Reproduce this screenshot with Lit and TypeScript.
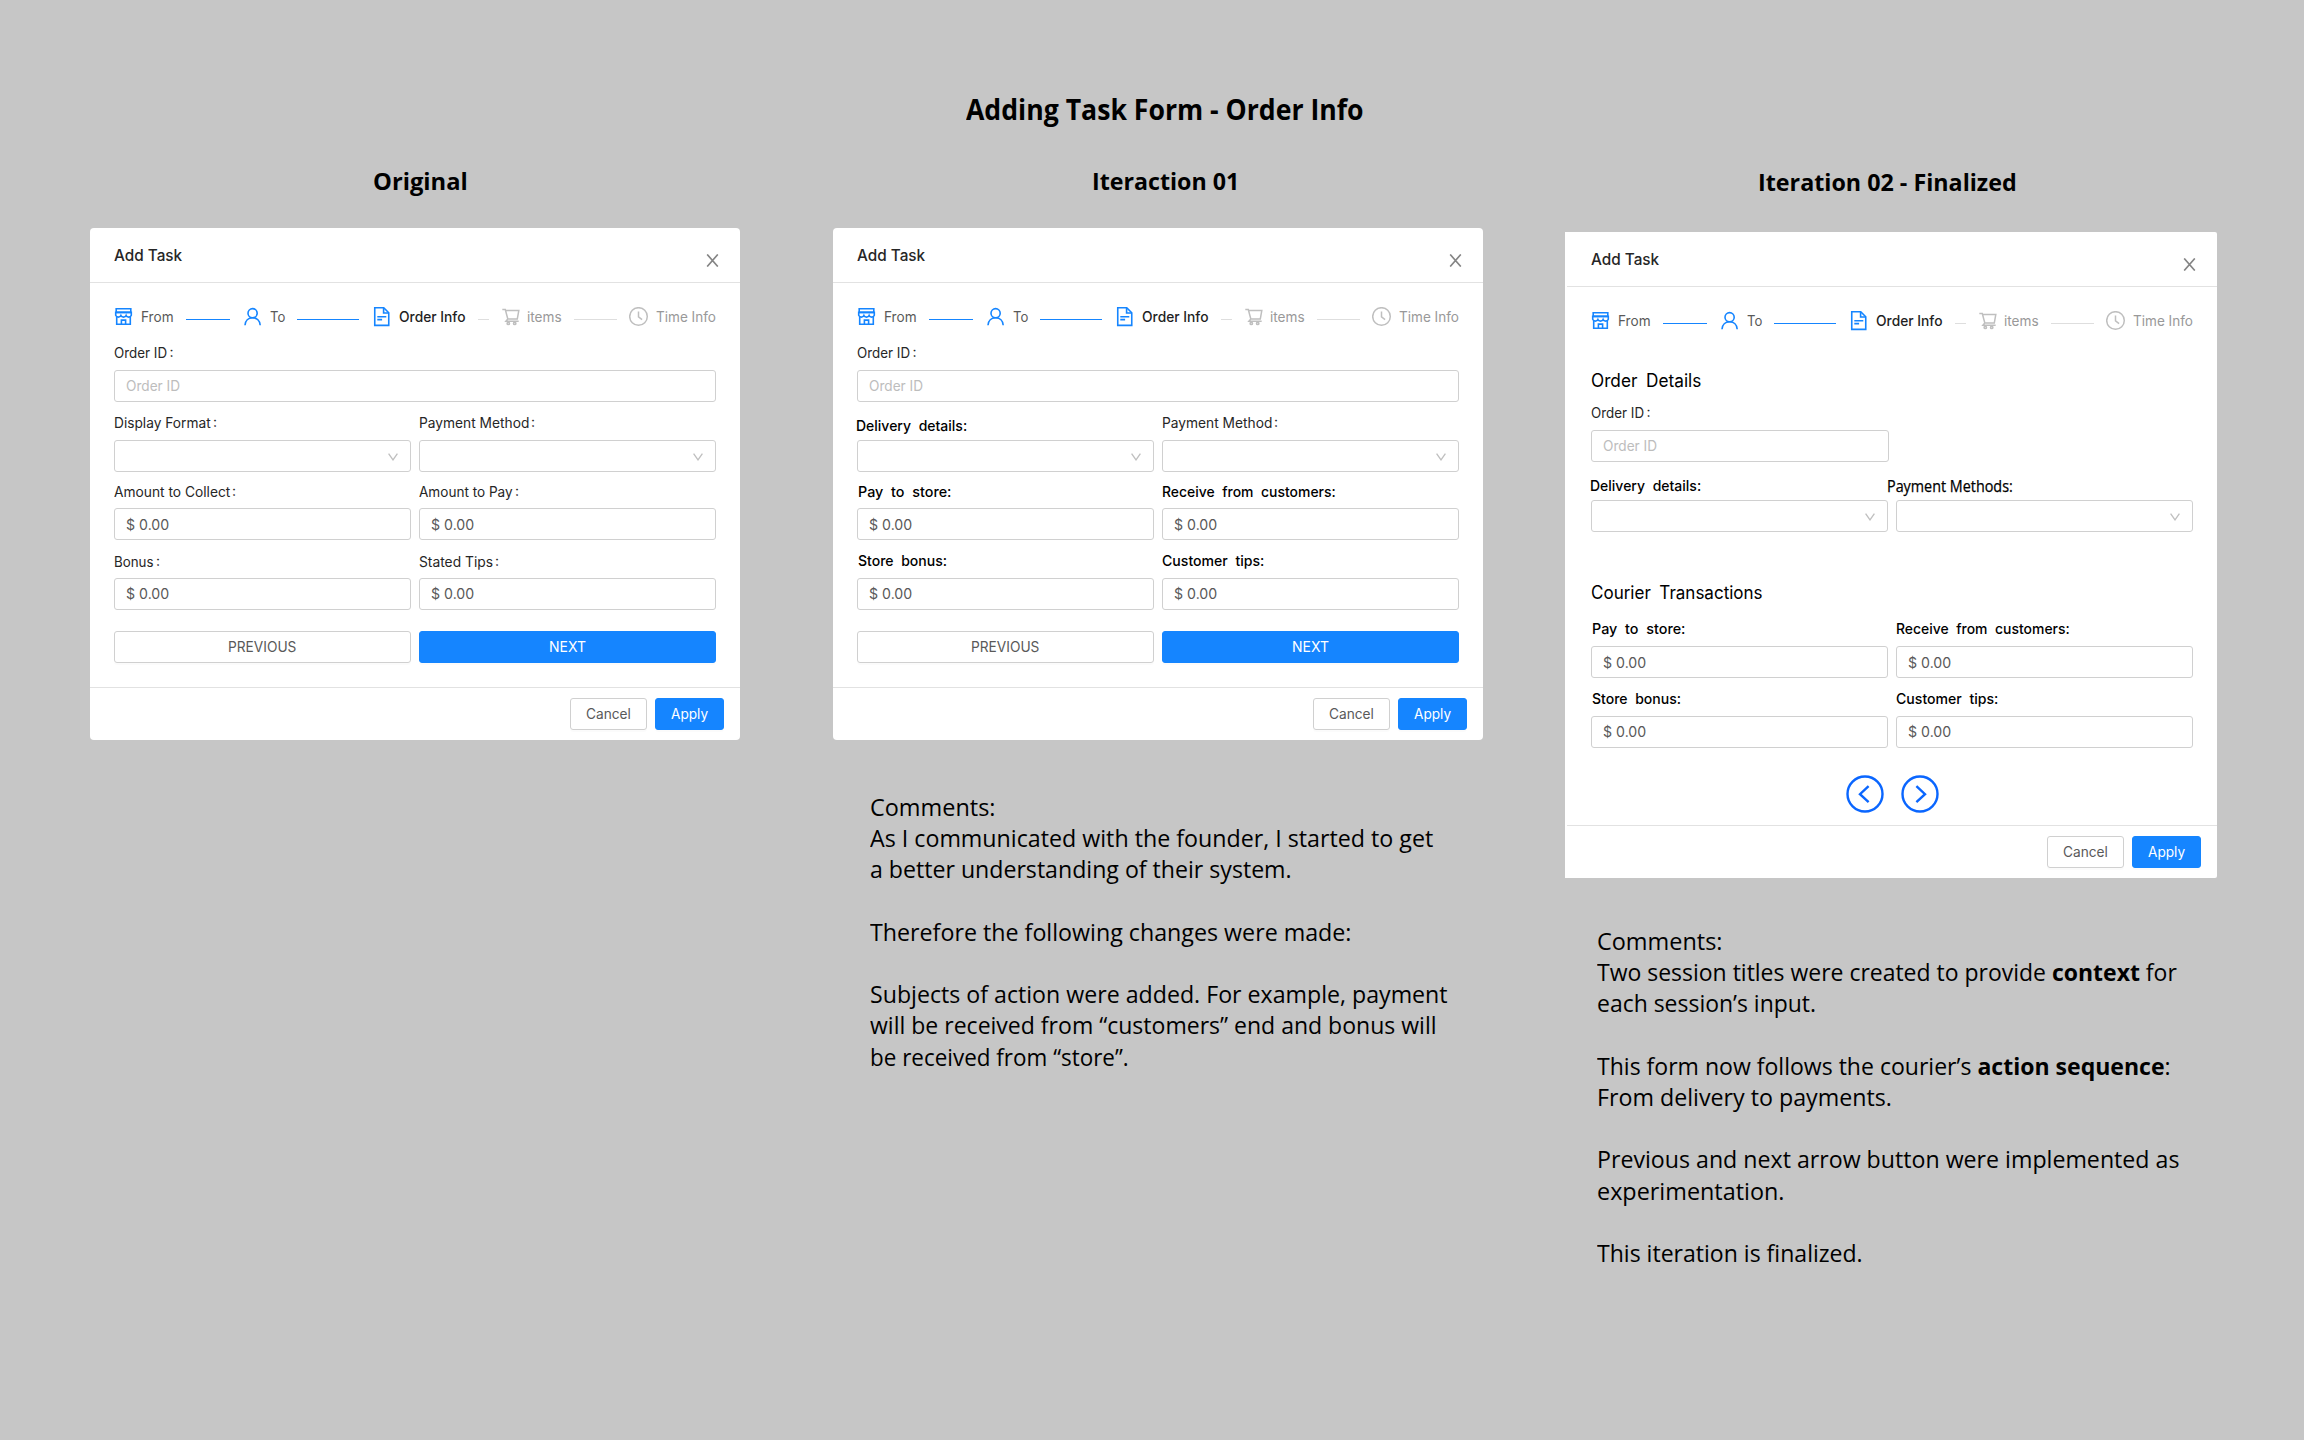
import { LitElement, html, svg, css, nothing, TemplateResult } from "lit";
import { customElement, property } from "lit/decorators.js";

/** One line of text, condensed or widened horizontally to a set measure. */
@customElement("fit-text")
class FitText extends LitElement {
  static styles = css`
    :host { display: inline-block; white-space: nowrap; flex: none; text-align: left; }
    .line { display: inline-block; transform-origin: 0 50%; vertical-align: top; }
  `;
  @property({ type: Number }) w = 0;
  updated() {
    const line = this.renderRoot.querySelector(".line") as HTMLElement;
    const natural = line.offsetWidth;
    this.style.width = `${this.w}px`;
    if (natural) line.style.transform = `scaleX(${this.w / natural})`;
  }
  render() {
    return html`<span class="line"><slot></slot></span>`;
  }
}

const ICONS: Record<string, TemplateResult> = {
  store: svg`<path d="M2.2 1.8h14.6v3.6H2.2z"/><path d="M1.7 5.4h15.6v2.8q-.6 1.9-2.6 1.9t-2.6-1.6q-.7 1.6-2.6 1.6T6.9 8.5q-.7 1.6-2.6 1.6T1.7 8.2z"/><path d="M2.7 9.8v7.5h13.6V9.8M7.4 17v-3.9h4.2V17"/>`,
  user: svg`<circle cx="9.6" cy="6.2" r="4.6"/><path d="M2 18.2c.3-4.5 3.3-7.4 7.6-7.4s7.3 2.9 7.6 7.4"/>`,
  doc: svg`<path d="M2.75 .8h9l5 5v12.6h-14z"/><path d="M11.6 1v5h5M5.3 9.8h9M5.3 12.6h4.8"/>`,
  cart: svg`<path d="M1.3 2.6h3l2.5 9.4h9.5l1.5-8.4H4.8M6.8 12l-1.9 2.3h12.8"/><circle cx="7.3" cy="16.4" r="1.2"/><circle cx="13.7" cy="16.4" r="1.2"/>`,
  clock: svg`<circle cx="9.5" cy="9.5" r="8.8"/><path d="M9.5 4.6v5.3l3.6 2.7"/>`,
};

interface Step { icon: string; label: string; w: number; line: number; state: string; }

const STEPS: Step[] = [
  { icon: "store", label: "From", w: 33, line: 44, state: "done" },
  { icon: "user", label: "To", w: 15, line: 62, state: "done" },
  { icon: "doc", label: "Order Info", w: 67, line: 11, state: "current" },
  { icon: "cart", label: "items", w: 35, line: 43, state: "wait" },
  { icon: "clock", label: "Time Info", w: 60, line: 0, state: "wait" },
];

interface Field {
  kind: "input" | "select" | "money";
  label: string;
  w: number;
  tone?: "strong" | "humanist";
  top: number;
  lh: number;
  shift?: number;
  drop?: boolean;
}

const orderId: Field = { kind: "input", label: "Order ID", w: 53.5, top: 9, lh: 34 };
const payMethod: Field = { kind: "select", label: "Payment Method", w: 110, top: 4, lh: 34 };

const ORIGINAL: Field[][] = [
  [orderId],
  [{ kind: "select", label: "Display Format", w: 97, top: 4, lh: 34 }, payMethod],
  [{ kind: "money", label: "Amount to Collect", w: 116, top: 4, lh: 32, drop: true }, { kind: "money", label: "Amount to Pay", w: 94, top: 4, lh: 32, drop: true }],
  [{ kind: "money", label: "Bonus", w: 40, top: 5, lh: 33 }, { kind: "money", label: "Stated Tips", w: 74, top: 5, lh: 33 }],
];

const storeRow = (top: number, lh: number): Field[] => [
  { kind: "money", label: "Pay to store:", w: 93, tone: "strong", top, lh, shift: 1, drop: true },
  { kind: "money", label: "Receive from customers:", w: 174, tone: "strong", top, lh, drop: true },
];
const bonusRow: Field[] = [
  { kind: "money", label: "Store bonus:", w: 89, tone: "strong", top: 4, lh: 34, shift: 1 },
  { kind: "money", label: "Customer tips:", w: 102, tone: "strong", top: 4, lh: 34 },
];
const delivery: Field = { kind: "select", label: "Delivery details:", w: 111, tone: "strong", top: 10, lh: 28, shift: -1.5 };

@customElement("task-card")
class TaskCard extends LitElement {
  static styles = css`
    :host { display: block; box-sizing: border-box; width: 650px; background: #fff; border-radius: 4px;
      font: 14px/20px Inter, "Liberation Sans", sans-serif; color: #262626; }
    :host([variant="final"]) { width: 652px; padding-left: 2px; border-radius: 0 2px 2px 0; }
    .head { display: flex; align-items: center; justify-content: space-between; height: 54px;
      padding: 0 21.5px 0 23.5px; border-bottom: 1px solid #e2e2e2; }
    .title { font-size: 16px; font-weight: 500; }
    .close { width: 13px; height: 13px; margin-top: 10px; stroke: #858585; stroke-width: 1.6; fill: none; }
    .body { padding: 24px; }
    .final .body { padding-bottom: 12px; }
    .steps { display: flex; align-items: center; height: 20px; color: #595959; }
    .icon { width: 20px; height: 20px; flex: none; margin-right: 6.5px; fill: none; stroke: #1585ff; stroke-width: 1.6; }
    .rule { height: 1px; flex: none; margin: 5px 12px 0 12px; background: #1585ff; }
    .rule.done { margin: 5px 13px 0 12.5px; }
    .current { color: #1f1f1f; font-weight: 500; }
    .wait { color: #999; }
    .icon.wait { stroke: #bfbfbf; stroke-width: 1.5; }
    .rule.current, .rule.wait { background: #dedede; }
    .row { display: flex; gap: 8px; }
    .field { flex: 1 1 0; min-width: 0; }
    .label { display: flex; white-space: nowrap; }
    .colon { margin: -1px 0 0 2.5px; }
    .strong { color: #000; font-size: 14.5px; font-weight: 450; word-spacing: 4px; }
    .humanist { color: #000; font: 500 15.5px "Open Sans", "Noto Sans", sans-serif; -webkit-text-stroke: 0.25px #000; }
    .box { box-sizing: border-box; height: 32px; display: flex; align-items: center; padding: 0 12px 0 10.5px;
      border: 1px solid #d0d0d0; border-radius: 3px; color: #595959; }
    .drop { padding-top: 2px; }
    .narrow { width: 298px; }
    .placeholder { color: #bdbdbd; }
    .chev { width: 10px; height: 8px; margin: 1px 0 0 auto; fill: none; stroke: #bfbfbf; stroke-width: 1.3; }
    .section { margin-top: 37px; height: 24px; font-size: 18px; line-height: 25px; color: #000; word-spacing: 4px; }
    .section.second { margin-top: 48px; }
    .actions { display: flex; gap: 8px; margin-top: 21px; }
    .btn { box-sizing: border-box; height: 32px; display: flex; align-items: center; justify-content: center;
      border: 1px solid #d0d0d0; border-radius: 3px; color: #595959; box-shadow: 0 2px 0 rgba(0, 0, 0, 0.015); }
    .wide { flex: 1; }
    .primary { background: #1585ff; border-color: #1585ff; color: #fff; }
    .foot { display: flex; justify-content: flex-end; gap: 8px; padding: 10px 16px; border-top: 1px solid #e2e2e2; }
    .cancel { width: 77px; }
    .apply { width: 69px; }
    .pager { display: flex; justify-content: center; gap: 17px; margin-top: 27px; height: 38px; }
    .round { width: 38px; height: 38px; fill: none; stroke: #0a66ff; stroke-width: 2.4; }
  `;
  @property({ attribute: false }) fields: Field[][] = [];
  @property() variant = "plain";

  private steps() {
    return html`<div class="steps">${STEPS.map((s) => html`
      <svg class="icon ${s.state === "wait" ? "wait" : ""}" viewBox="0 0 20 20">${ICONS[s.icon]}</svg>
      <fit-text class=${s.state} .w=${s.w}>${s.label}</fit-text>
      ${s.line ? html`<span class="rule ${s.state}" style="width:${s.line}px"></span>` : nothing}`)}
    </div>`;
  }

  private control(f: Field) {
    const narrow = this.variant === "final" && f.kind === "input" ? "narrow" : "";
    return html`<div class="box ${narrow} ${f.drop ? "drop" : ""}">
      ${f.kind === "input" ? html`<fit-text class="placeholder" .w=${54.5}>Order ID</fit-text>` : nothing}
      ${f.kind === "money" ? html`<fit-text .w=${43.5}>$ 0.00</fit-text>` : nothing}
      ${f.kind === "select" ? html`<svg class="chev" viewBox="0 0 10 8"><path d="M.6.6 5 6.9 9.4.6"/></svg>` : nothing}
    </div>`;
  }

  private row(fields: Field[]) {
    return html`<div class="row">${fields.map((f) => html`<div class="field">
      <div class="label" style="padding-top:${f.top}px;height:${f.lh}px;line-height:${f.lh}px;margin-left:${f.shift ?? -0.5}px">
        <fit-text class=${f.tone ?? ""} style="line-height:${f.lh}px" .w=${f.w}>${f.label}</fit-text>
        ${f.tone ? nothing : html`<span class="colon">:</span>`}
      </div>
      ${this.control(f)}
    </div>`)}</div>`;
  }

  render() {
    const final = this.variant === "final";
    return html`<div class=${this.variant}>
      <div class="head">
        <fit-text class="title" .w=${68}>Add Task</fit-text>
        <svg class="close" viewBox="0 0 13 13"><path d="M1.2.4 11.8 12.6M11.8.4 1.2 12.6"/></svg>
      </div>
      <div class="body">
        ${this.steps()}
        ${final
          ? html`<div class="section"><fit-text .w=${110}>Order Details</fit-text></div>
              ${this.fields.slice(0, 2).map((r) => this.row(r))}
              <div class="section second"><fit-text .w=${172}>Courier Transactions</fit-text></div>
              ${this.fields.slice(2).map((r) => this.row(r))}
              <div class="pager">
                <svg class="round" viewBox="0 0 38 38"><circle cx="19" cy="19" r="17.5"/><path d="M22.6 11.2 14 19.2l8.6 8"/></svg>
                <svg class="round" viewBox="0 0 38 38"><circle cx="19" cy="19" r="17.5"/><path d="M15.4 11.2 24 19.2l-8.6 8"/></svg>
              </div>`
          : html`${this.fields.map((r) => this.row(r))}
              <div class="actions">
                <div class="btn wide"><fit-text .w=${68.5}>PREVIOUS</fit-text></div>
                <div class="btn wide primary"><fit-text .w=${37}>NEXT</fit-text></div>
              </div>`}
      </div>
      <div class="foot">
        <div class="btn cancel"><fit-text .w=${45}>Cancel</fit-text></div>
        <div class="btn apply primary"><fit-text .w=${37}>Apply</fit-text></div>
      </div>
    </div>`;
  }
}

type Line = [number, string | TemplateResult] | null;

const NOTES_1: Line[] = [
  [125, "Comments:"],
  [563, "As I communicated with the founder, I started to get"],
  [422, "a better understanding of their system."],
  null,
  [481, "Therefore the following changes were made:"],
  null,
  [578, "Subjects of action were added. For example, payment"],
  [567, "will be received from “customers” end and bonus will"],
  [259, "be received from “store”."],
];

const NOTES_2: Line[] = [
  [125, "Comments:"],
  [580, html`Two session titles were created to provide <b>context</b> for`],
  [219, "each session’s input."],
  null,
  [574, html`This form now follows the courier’s <b>action sequence</b>:`],
  [295, "From delivery to payments."],
  null,
  [582, "Previous and next arrow button were implemented as"],
  [187, "experimentation."],
  null,
  [266, "This iteration is finalized."],
];

const FINAL: Field[][] = [
  [{ ...orderId, top: 4 }],
  [delivery, { kind: "select", label: "Payment Methods:", w: 126, tone: "humanist", top: 10, lh: 28, shift: -9 }],
  storeRow(8, 34),
  bonusRow,
];

@customElement("app-root")
class AppRoot extends LitElement {
  static styles = css`
    :host { display: block; }
    .board { box-sizing: border-box; width: 2304px; height: 1440px; overflow: hidden; background: #c6c6c6; color: #000;
      padding: 91px 0 0 90px; font-family: "Open Sans", "Noto Sans", sans-serif; }
    .main { height: 74px; padding-left: 876px; font-size: 28.5px; font-weight: 700; line-height: 36px; }
    .cols { display: flex; align-items: flex-start; }
    .second { margin-left: 93px; }
    .third { margin-left: 82px; }
    .name { height: 63px; font-size: 24px; font-weight: 700; line-height: 31px; }
    .first .name { padding-left: 283px; }
    .second .name { padding-left: 259px; }
    .third .name { padding: 1px 0 3px 193px; }
    .notes { font-size: 24px; line-height: 31.2px; padding: 51px 0 0 37px; }
    .third .notes { padding: 47px 0 0 32px; }
    .line { height: 31.2px; }
    .line b { font-weight: 700; }
  `;
  private notes(lines: Line[]) {
    return html`<div class="notes">${lines.map((l) => html`<div class="line">${l ? html`<fit-text .w=${l[0]}>${l[1]}</fit-text>` : nothing}</div>`)}</div>`;
  }
  render() {
    return html`<div class="board">
      <div class="main"><fit-text .w=${398}>Adding Task Form - Order Info</fit-text></div>
      <div class="cols">
        <section class="first">
          <div class="name"><fit-text .w=${95}>Original</fit-text></div>
          <task-card .fields=${ORIGINAL}></task-card>
        </section>
        <section class="second">
          <div class="name"><fit-text .w=${147}>Iteraction 01</fit-text></div>
          <task-card .fields=${[[orderId], [delivery, payMethod], storeRow(3, 33), bonusRow]}></task-card>
          ${this.notes(NOTES_1)}
        </section>
        <section class="third">
          <div class="name"><fit-text .w=${259}>Iteration 02 - Finalized</fit-text></div>
          <task-card variant="final" .fields=${FINAL}></task-card>
          ${this.notes(NOTES_2)}
        </section>
      </div>
    </div>`;
  }
}
